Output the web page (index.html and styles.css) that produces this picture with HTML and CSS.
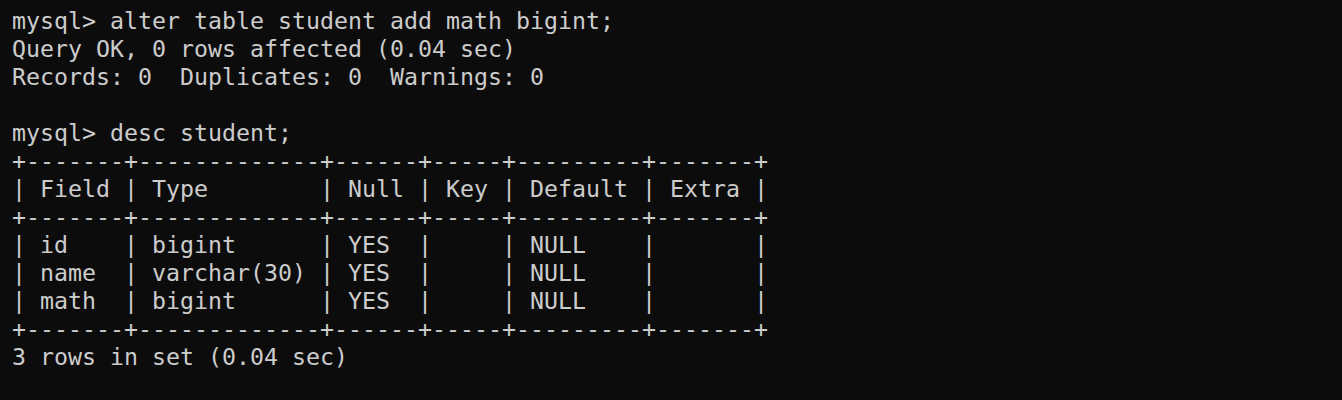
FILE: index.html
```html
<!DOCTYPE html>
<html>
<head>
<meta charset="utf-8">
<link rel="stylesheet" href="styles.css">
</head>
<body>
<pre class="term">mysql&gt; alter table student add math bigint;
Query OK, 0 rows affected (0.04 sec)
Records: 0  Duplicates: 0  Warnings: 0

mysql&gt; desc student;
+-------+-------------+------+-----+---------+-------+
| Field | Type        | Null | Key | Default | Extra |
+-------+-------------+------+-----+---------+-------+
| id    | bigint      | YES  |     | NULL    |       |
| name  | varchar(30) | YES  |     | NULL    |       |
| math  | bigint      | YES  |     | NULL    |       |
+-------+-------------+------+-----+---------+-------+
3 rows in set (0.04 sec)
</pre>
</body>
</html>
```
FILE: styles.css
```css
html, body {
  margin: 0;
  padding: 0;
  background: #0c0c0c;
  height: 100%;
}
.term {
  margin: 0;
  padding: 7px 0 0 12px;
  color: #cccccc;
  font-family: "DejaVu Sans Mono", "Liberation Mono", monospace;
  font-size: 23.25px;
  line-height: 28px;
  white-space: pre;
}
```
